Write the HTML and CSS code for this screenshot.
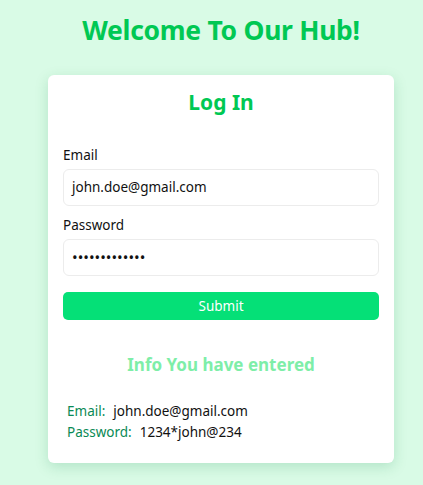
FILE: index.html
```html
<!DOCTYPE html>
<html>
<head>
<meta charset="utf-8">
<link rel="stylesheet" href="styles.css">
</head>
<body>
<h1 class="title">Welcome To Our Hub!</h1>
<div class="card">
  <h2 class="card-title">Log In</h2>
  <form class="form">
    <label class="label">Email</label>
    <div class="input">john.doe@gmail.com</div>
    <label class="label">Password</label>
    <div class="input dots">•••••••••••••</div>
    <button class="submit" type="button">Submit</button>
  </form>
  <h3 class="info-title">Info You have entered</h3>
  <div class="info">
    <div class="row"><span class="key">Email:</span><span class="val">john.doe@gmail.com</span></div>
    <div class="row"><span class="key">Password:</span><span class="val">1234*john@234</span></div>
  </div>
</div>
</body>
</html>
```
FILE: styles.css
```css
* { box-sizing: border-box; }
html, body { margin: 0; padding: 0; }
body {
  background: #d9fbe6;
  font-family: "Noto Sans", "Open Sans", sans-serif;
  color: #111;
  width: 423px;
  height: 485px;
  overflow: hidden;
}
.title {
  margin: 0 0 0 48px;
  width: 346px;
  padding-top: 10px;
  height: 75px;
  text-align: center;
  font-size: 26.5px;
  line-height: 40px;
  font-weight: 700;
  color: #00c853;
  letter-spacing: -0.3px;
  white-space: nowrap;
}
.card {
  margin: 0 29px 0 48px;
  width: 346px;
  height: 388px;
  background: #fff;
  border-radius: 6px;
  box-shadow: 0 4px 14px rgba(0, 120, 60, 0.18);
  padding: 12px 15px 0 15px;
}
.card-title {
  margin: 0;
  text-align: center;
  font-size: 21px;
  line-height: 30px;
  font-weight: 700;
  color: #00c853;
}
.form {
  display: flex;
  flex-direction: column;
  margin-top: 28px;
}
.label {
  font-size: 13.5px;
  line-height: 20px;
  margin-bottom: 4px;
}
.input {
  height: 37px;
  border: 1px solid #ececec;
  border-radius: 6px;
  padding: 0 8px;
  font-size: 13.5px;
  line-height: 35px;
  margin-bottom: 9px;
}
.input.dots {
  font-size: 15px;
  letter-spacing: 0;
  margin-bottom: 16px;
}
.submit {
  height: 28px;
  border: none;
  border-radius: 5px;
  background: #05e077;
  color: #fff;
  font-family: inherit;
  font-size: 13.5px;
  padding: 0;
}
.info-title {
  margin: 33px 0 0 0;
  text-align: center;
  font-size: 17px;
  line-height: 24px;
  font-weight: 700;
  color: #7eeea8;
}
.info {
  margin-top: 24px;
  padding-left: 4px;
  font-size: 13.5px;
  line-height: 21px;
}
.key {
  color: #0a8a55;
  margin-right: 8px;
}
.val { color: #111; }
```
